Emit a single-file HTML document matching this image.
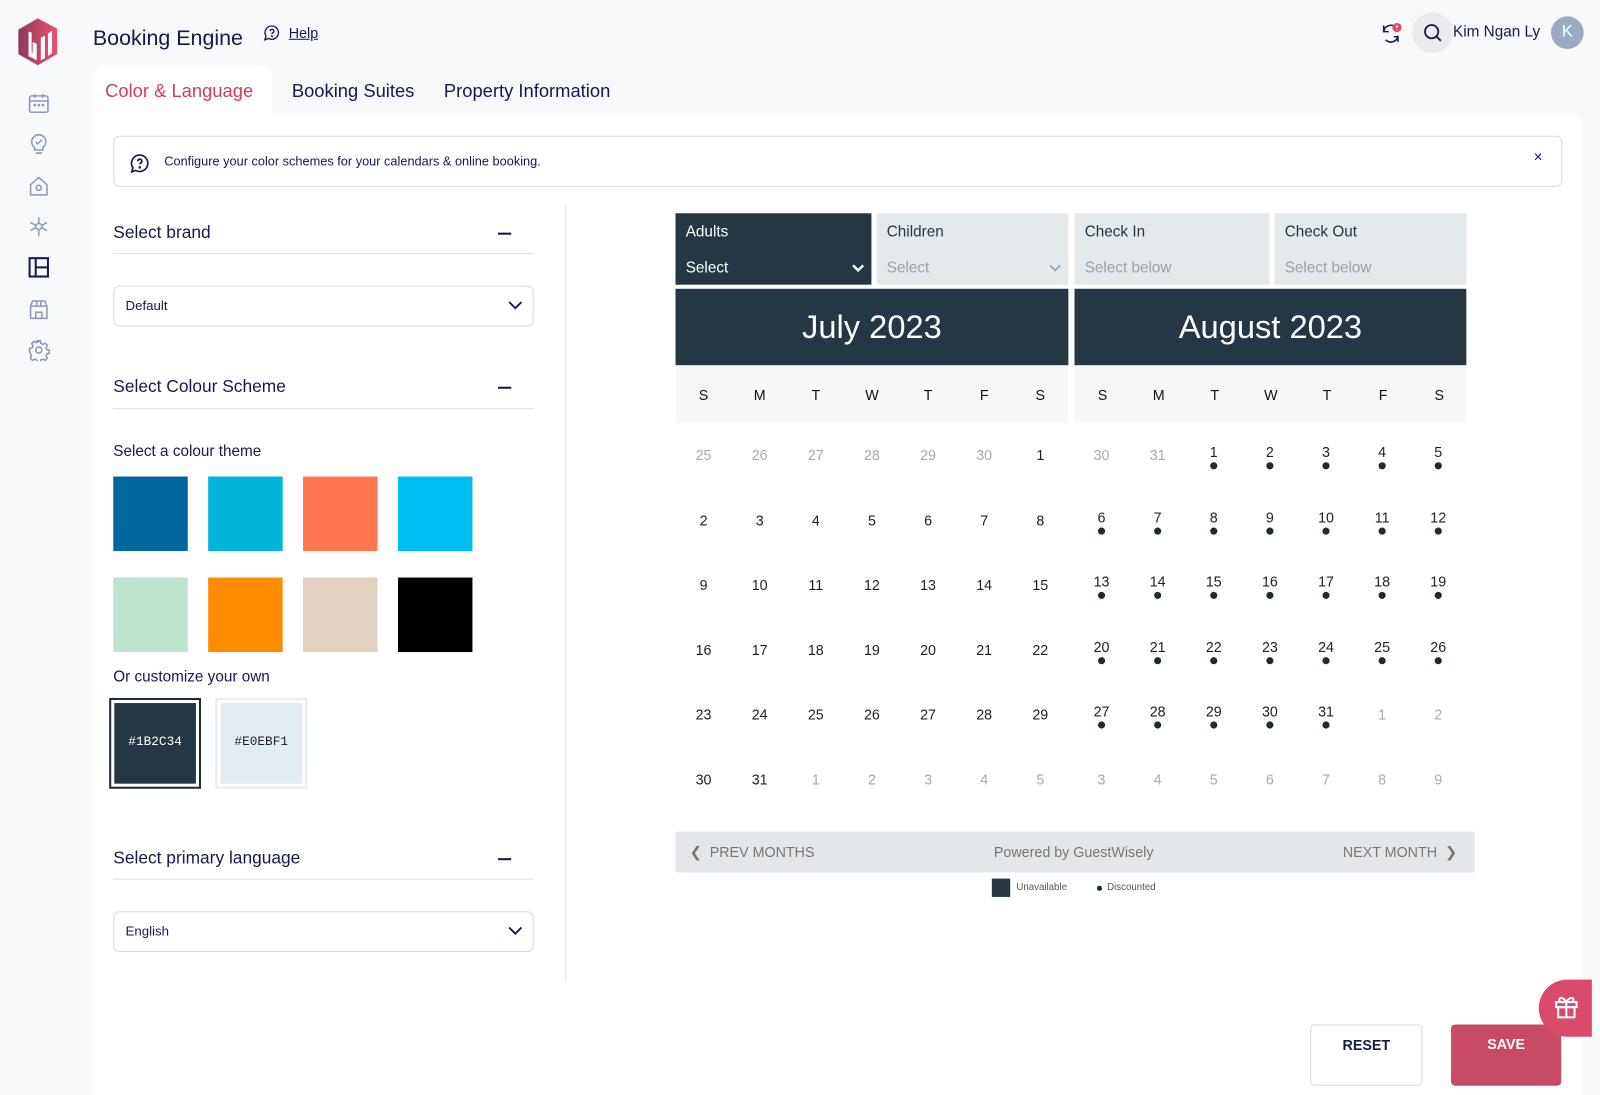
<!DOCTYPE html>
<html><head><meta charset="utf-8"><style>
*{box-sizing:border-box;margin:0;padding:0}
body{width:1600px;height:1053px;overflow:hidden;background:#f8f9fb;font-family:"Liberation Sans",sans-serif;color:#141a4d;position:relative}
#w{position:absolute;left:0;top:0;width:1568px;height:1032px;transform:scale(1.020408);transform-origin:0 0}
.a{position:absolute}
.side{left:0;top:0;width:76px;height:1053px;background:#f8f9fb}
.panel{left:91px;top:113px;width:1460px;height:960px;background:#fff;border-radius:0 10px 0 0}
.tab{top:64px;height:50px;font-size:18px;line-height:50px}
h3{position:absolute;font-size:17px;font-weight:normal;color:#141a4d}
.hl{position:absolute;left:111px;width:412px;height:1px;background:#dde0e6}
.minus{position:absolute;left:488px;width:13px;height:2px;background:#141a4d}
.dd{position:absolute;left:111px;width:412px;height:40px;border:1px solid #d8dbe2;border-radius:6px;font-size:13px;line-height:38px;padding-left:11px}
.sw{position:absolute;width:73px;height:73px}
.sel{top:209px;height:70px;background:#e4e9eb;color:#243742}
.sel .l{position:absolute;left:10px;top:10px;font-size:15px}
.sel .v{position:absolute;left:10px;top:45px;font-size:15px;color:#9aa3a8}
.mh{top:283px;height:75px;background:#243742;color:#fff;font-size:32px;text-align:center;line-height:75px}
.wk{top:358px;height:56px;background:#f7f7f7;display:grid;grid-template-columns:repeat(7,55px);font-size:14px;line-height:58px;text-align:center;color:#111}
.g{top:414px;display:grid;grid-template-columns:repeat(7,55px);grid-auto-rows:63.6px;text-align:center;font-size:14px;color:#222}
.g div{padding-top:24px;line-height:16px}
.g .o{color:#aaa}
.g .d{padding-top:21px;position:relative}
.g .d:after{content:"";position:absolute;left:24px;top:39px;width:7px;height:7px;border-radius:50%;background:#1b2c34}
.ic{position:absolute;left:27px;width:22px;height:22px}
</style></head><body><div id="w">
<div class="a side"></div>
<svg class="a" style="left:16px;top:17px" width="42" height="48" viewBox="0 0 42 48"><defs><linearGradient id="lg" x1="0" x2="1"><stop offset="0" stop-color="#8e3a5e"/><stop offset="1" stop-color="#f0506e"/></linearGradient></defs><path d="M21 1 L40 11 L40 36 L21 47 L2 36 L2 12 Z" fill="url(#lg)"/><path d="M12 14 L12 38 L20 42 L20 26 L16 24 L16 35 L15 34 L15 15 Z M24 20 L24 42 L28 40 L28 18 Z M31 16 L31 38 L35 35 L35 13 Z" fill="#fff"/></svg>
<svg class="ic" style="top:90px" viewBox="0 0 22 22" fill="none" stroke="#8a9ab5" stroke-width="1.5"><rect x="2" y="4" width="18" height="16" rx="2"/><path d="M2 9h18M7 2v4M15 2v4"/><circle cx="7" cy="13" r=".6"/><circle cx="11" cy="13" r=".6"/><circle cx="15" cy="13" r=".6"/></svg>
<svg class="ic" style="top:130px" viewBox="0 0 22 22" fill="none" stroke="#8a9ab5" stroke-width="1.5"><path d="M11 2a7 7 0 0 0-4 12.7V17h8v-2.3A7 7 0 0 0 11 2zM8 20h6M8 9l2 2 4-4"/></svg>
<svg class="ic" style="top:171px" viewBox="0 0 22 22" fill="none" stroke="#8a9ab5" stroke-width="1.5"><path d="M3 10L11 3l8 7v10H3z"/><circle cx="11" cy="13" r="2.5"/></svg>
<svg class="ic" style="top:211px" viewBox="0 0 22 22" fill="none" stroke="#8a9ab5" stroke-width="1.5"><circle cx="11" cy="11" r="3"/><path d="M11 2v6M11 14v6M3 7l5 3M14 12l5 3M3 15l5-3M14 10l5-3"/></svg>
<svg class="ic" style="top:251px" viewBox="0 0 22 22" fill="none" stroke="#141a4d" stroke-width="2"><rect x="2" y="2" width="18" height="18"/><path d="M8 2v18M8 11h12"/></svg>
<svg class="ic" style="top:292px" viewBox="0 0 22 22" fill="none" stroke="#8a9ab5" stroke-width="1.5"><path d="M3 8l2-5h12l2 5v12H3zM3 8h16M8 20v-6h6v6M9 3v5M13 3v5"/></svg>
<svg class="ic" style="top:332px" viewBox="0 0 22 22" fill="none" stroke="#8a9ab5" stroke-width="1.5"><circle cx="11" cy="11" r="3"/><path d="M9.5 2h3l.5 2.5 2 1 2.3-1.2 2.1 2.1-1.2 2.3.8 2 2.5.5v3l-2.5.5-.8 2 1.2 2.3-2.1 2.1-2.3-1.2-2 .8-.5 2.5h-3l-.5-2.5-2-.8-2.3 1.2-2.1-2.1 1.2-2.3-.8-2L2 12.5v-3l2.5-.5.8-2-1.2-2.3 2.1-2.1 2.3 1.2 2-1z"/></svg>
<div class="a" style="left:91px;top:26px;font-size:21px">Booking Engine</div>
<svg class="a" style="left:258px;top:24px" width="17" height="17" viewBox="0 0 17 17" fill="none" stroke="#141a4d" stroke-width="1.3"><path d="M8.5 1.5a6.5 6.5 0 1 1-3.2 12.2L1.5 15l1.2-3.6A6.5 6.5 0 0 1 8.5 1.5z"/><path d="M6.8 6.5a1.8 1.8 0 1 1 2.4 1.7c-.5.2-.7.6-.7 1.1"/><circle cx="8.5" cy="11.5" r=".4"/></svg>
<div class="a" style="left:283px;top:24px;font-size:14px;text-decoration:underline">Help</div>
<svg class="a" style="left:1352px;top:22px" width="24" height="22" viewBox="0 0 24 22" fill="none" stroke="#141a4d" stroke-width="1.5"><path d="M4 9a7 7 0 0 1 12-4M18 13a7 7 0 0 1-12 4M4 3v6h5M18 19v-5h-4"/><circle cx="17" cy="5" r="4.5" fill="#d94a64" stroke="none"/><path d="M17 2.5v3M17 6.8v.4" stroke="#fff" stroke-width="1.3"/></svg>
<div class="a" style="left:1384px;top:12px;width:40px;height:40px;border-radius:50%;background:#ebebec"></div>
<svg class="a" style="left:1394px;top:22px" width="20" height="20" viewBox="0 0 20 20" fill="none" stroke="#141a4d" stroke-width="1.8"><circle cx="9" cy="9" r="6.5"/><path d="M14 14l4 4"/></svg>
<div class="a" style="left:1424px;top:23px;font-size:15px">Kim Ngan Ly</div>
<div class="a" style="left:1520px;top:16px;width:32px;height:32px;border-radius:50%;background:#9aaac0;color:#fff;text-align:center;line-height:32px;font-size:16px">K</div>
<div class="a" style="left:91px;top:64px;width:175px;height:52px;background:#fff;border-radius:10px 10px 0 0"></div>
<div class="a panel"></div>
<div class="a tab" style="left:103px;color:#d83a5c">Color &amp; Language</div>
<div class="a tab" style="left:286px">Booking Suites</div>
<div class="a tab" style="left:435px">Property Information</div>
<div class="a" style="left:111px;top:133px;width:1420px;height:50px;border:1px solid #d8dbe2;border-radius:6px"></div>
<svg class="a" style="left:127px;top:150px" width="20" height="20" viewBox="0 0 20 20" fill="none" stroke="#141a4d" stroke-width="1.6"><path d="M10 2a8 8 0 1 1-4 15L2 18.5l1.3-4A8 8 0 0 1 10 2z"/><path d="M8 8a2 2 0 1 1 2.7 1.9c-.5.2-.7.6-.7 1.2"/><circle cx="10" cy="14" r=".5"/></svg>
<div class="a" style="left:161px;top:151px;font-size:12.5px">Configure your color schemes for your calendars &amp; online booking.</div>
<div class="a" style="left:1503px;top:146px;font-size:15px">×</div>
<h3 style="left:111px;top:218px">Select brand</h3><div class="minus" style="top:228px"></div><div class="hl" style="top:248px"></div>
<div class="dd" style="top:280px">Default</div>
<svg class="a" style="left:498px;top:294px" width="14" height="10" viewBox="0 0 14 10" fill="none" stroke="#141a4d" stroke-width="1.8"><path d="M1 2l6 6 6-6"/></svg>
<h3 style="left:111px;top:369px">Select Colour Scheme</h3><div class="minus" style="top:379px"></div><div class="hl" style="top:400px"></div>
<div class="a" style="left:111px;top:434px;font-size:15px">Select a colour theme</div>
<div class="sw" style="left:111px;top:467px;background:#00679e"></div>
<div class="sw" style="left:204px;top:467px;background:#00b5d8"></div>
<div class="sw" style="left:297px;top:467px;background:#ff7550"></div>
<div class="sw" style="left:390px;top:467px;background:#00bcf0"></div>
<div class="sw" style="left:111px;top:566px;background:#bbe5cf"></div>
<div class="sw" style="left:204px;top:566px;background:#ff8c00"></div>
<div class="sw" style="left:297px;top:566px;background:#e1d2c0"></div>
<div class="sw" style="left:390px;top:566px;background:#000"></div>
<div class="a" style="left:111px;top:655px;font-size:15px">Or customize your own</div>
<div class="a" style="left:107px;top:684px;width:90px;height:89px;border:2px solid #1b2c34;padding:3px"><div style="width:100%;height:100%;background:#243742;color:#fff;font-size:12.5px;text-align:center;line-height:77px;font-family:'Liberation Mono',monospace">#1B2C34</div></div>
<div class="a" style="left:211px;top:684px;width:90px;height:89px;border:2px solid #e5edf4;padding:3px"><div style="width:100%;height:100%;background:#e3ecf3;color:#222;font-size:12.5px;text-align:center;line-height:77px;font-family:'Liberation Mono',monospace">#E0EBF1</div></div>
<h3 style="left:111px;top:831px">Select primary language</h3><div class="minus" style="top:841px"></div><div class="hl" style="top:861px"></div>
<div class="dd" style="top:893px">English</div>
<svg class="a" style="left:498px;top:907px" width="14" height="10" viewBox="0 0 14 10" fill="none" stroke="#141a4d" stroke-width="1.8"><path d="M1 2l6 6 6-6"/></svg>
<div class="a" style="left:554px;top:200px;width:1px;height:762px;background:#dde0e6"></div>
<div class="a sel" style="left:662px;width:192px;background:#243742"><div class="l" style="color:#fff">Adults</div><div class="v" style="color:#fff">Select</div>
<svg class="a" style="left:172px;top:49px" width="14" height="10" viewBox="0 0 14 10" fill="none" stroke="#fff" stroke-width="2.4"><path d="M2 2l5 5 5-5"/></svg></div>
<div class="a sel" style="left:859px;width:188px"><div class="l">Children</div><div class="v">Select</div>
<svg class="a" style="left:168px;top:49px" width="14" height="10" viewBox="0 0 14 10" fill="none" stroke="#9aa3a8" stroke-width="1.6"><path d="M2 2l5 5 5-5"/></svg></div>
<div class="a sel" style="left:1053px;width:191px"><div class="l">Check In</div><div class="v">Select below</div></div>
<div class="a sel" style="left:1249px;width:188px"><div class="l">Check Out</div><div class="v">Select below</div></div>
<div class="a mh" style="left:662px;width:385px">July 2023</div>
<div class="a mh" style="left:1053px;width:384px">August 2023</div>
<div class="a wk" style="left:662px;width:385px"><div>S</div><div>M</div><div>T</div><div>W</div><div>T</div><div>F</div><div>S</div></div>
<div class="a wk" style="left:1053px;width:384px"><div>S</div><div>M</div><div>T</div><div>W</div><div>T</div><div>F</div><div>S</div></div>
<div class="a g" style="left:662px">
<div class="o">25</div><div class="o">26</div><div class="o">27</div><div class="o">28</div><div class="o">29</div><div class="o">30</div><div>1</div>
<div>2</div><div>3</div><div>4</div><div>5</div><div>6</div><div>7</div><div>8</div>
<div>9</div><div>10</div><div>11</div><div>12</div><div>13</div><div>14</div><div>15</div>
<div>16</div><div>17</div><div>18</div><div>19</div><div>20</div><div>21</div><div>22</div>
<div>23</div><div>24</div><div>25</div><div>26</div><div>27</div><div>28</div><div>29</div>
<div>30</div><div>31</div><div class="o">1</div><div class="o">2</div><div class="o">3</div><div class="o">4</div><div class="o">5</div>
</div>
<div class="a g" style="left:1052px">
<div class="o">30</div><div class="o">31</div><div class="d">1</div><div class="d">2</div><div class="d">3</div><div class="d">4</div><div class="d">5</div>
<div class="d">6</div><div class="d">7</div><div class="d">8</div><div class="d">9</div><div class="d">10</div><div class="d">11</div><div class="d">12</div>
<div class="d">13</div><div class="d">14</div><div class="d">15</div><div class="d">16</div><div class="d">17</div><div class="d">18</div><div class="d">19</div>
<div class="d">20</div><div class="d">21</div><div class="d">22</div><div class="d">23</div><div class="d">24</div><div class="d">25</div><div class="d">26</div>
<div class="d">27</div><div class="d">28</div><div class="d">29</div><div class="d">30</div><div class="d">31</div><div class="o">1</div><div class="o">2</div>
<div class="o">3</div><div class="o">4</div><div class="o">5</div><div class="o">6</div><div class="o">7</div><div class="o">8</div><div class="o">9</div>
</div>
<div class="a" style="left:662px;top:815px;width:783px;height:40px;background:#e4e7ea;color:#777;font-size:14px;line-height:40px">
<span class="a" style="left:14px">❮&nbsp; PREV MONTHS</span>
<span class="a" style="left:312px">Powered by GuestWisely</span>
<span class="a" style="left:654px">NEXT MONTH &nbsp;❯</span></div>
<div class="a" style="left:972px;top:861px;width:18px;height:18px;background:#243742"></div>
<div class="a" style="left:996px;top:864px;font-size:9.5px;color:#555">Unavailable</div>
<div class="a" style="left:1075px;top:868px;width:5px;height:5px;border-radius:50%;background:#1b2c34"></div>
<div class="a" style="left:1085px;top:864px;font-size:9.5px;color:#555">Discounted</div>
<div class="a" style="left:1284px;top:1004px;width:110px;height:60px;border:1px solid #d8dbe2;border-radius:4px;text-align:center;padding-top:11px;font-size:14px;font-weight:bold;background:#fff">RESET</div>
<div class="a" style="left:1422px;top:1004px;width:108px;height:60px;background:#c94a66;border-radius:4px;text-align:center;padding-top:11px;font-size:14px;font-weight:bold;color:#fff">SAVE</div>
<div class="a" style="left:1508px;top:960px;width:52px;height:56px;background:#d94a6c;border-radius:28px 0 0 28px"></div>
<svg class="a" style="left:1522px;top:973px" width="26" height="26" viewBox="0 0 26 26" fill="none" stroke="#fff" stroke-width="2"><rect x="3" y="9" width="20" height="5"/><rect x="5" y="14" width="16" height="10"/><path d="M13 9v15M13 9c-3-5-7-5-7-2s4 2 7 2c3 0 7 1 7-2s-4-3-7 2"/></svg>
</div></body></html>
